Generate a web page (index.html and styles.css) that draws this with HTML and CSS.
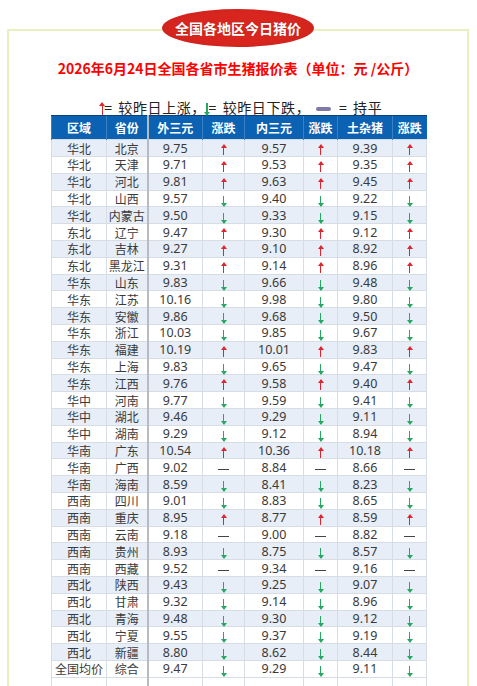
FILE: index.html
```html
<!DOCTYPE html>
<html lang="zh-CN">
<head>
<meta charset="utf-8">
<title>全国各地区今日猪价</title>
<link rel="stylesheet" href="styles.css">
</head>
<body>
<div class="frame">
  <div class="badge">全国各地区今日猪价</div>
  <h1 class="title">2026年6月24日全国各省市生猪报价表（单位：元 /公斤）</h1>
  <p class="legend"><i class="u big"></i>= 较昨日上涨，<i class="d big"></i>= 较昨日下跌，<i class="bar"></i> = 持平</p>
  <table class="prices">
    <colgroup>
      <col class="c1"><col class="c2"><col class="c3"><col class="c4"><col class="c5"><col class="c6"><col class="c7"><col class="c8">
    </colgroup>
    <thead>
      <tr><th>区域</th><th class="sep">省份</th><th>外三元</th><th>涨跌</th><th>内三元</th><th>涨跌</th><th>土杂猪</th><th>涨跌</th></tr>
    </thead>
    <tbody>
      <tr><td>华北</td><td class="sep">北京</td><td class="n">9.75</td><td><i class="u"></i></td><td class="n">9.57</td><td><i class="u"></i></td><td class="n">9.39</td><td><i class="u"></i></td></tr>
      <tr><td>华北</td><td class="sep">天津</td><td class="n">9.71</td><td><i class="u"></i></td><td class="n">9.53</td><td><i class="u"></i></td><td class="n">9.35</td><td><i class="u"></i></td></tr>
      <tr><td>华北</td><td class="sep">河北</td><td class="n">9.81</td><td><i class="u"></i></td><td class="n">9.63</td><td><i class="u"></i></td><td class="n">9.45</td><td><i class="u"></i></td></tr>
      <tr><td>华北</td><td class="sep">山西</td><td class="n">9.57</td><td><i class="d"></i></td><td class="n">9.40</td><td><i class="d"></i></td><td class="n">9.22</td><td><i class="d"></i></td></tr>
      <tr><td>华北</td><td class="sep">内蒙古</td><td class="n">9.50</td><td><i class="d"></i></td><td class="n">9.33</td><td><i class="d"></i></td><td class="n">9.15</td><td><i class="d"></i></td></tr>
      <tr><td>东北</td><td class="sep">辽宁</td><td class="n">9.47</td><td><i class="u"></i></td><td class="n">9.30</td><td><i class="u"></i></td><td class="n">9.12</td><td><i class="u"></i></td></tr>
      <tr><td>东北</td><td class="sep">吉林</td><td class="n">9.27</td><td><i class="u"></i></td><td class="n">9.10</td><td><i class="u"></i></td><td class="n">8.92</td><td><i class="u"></i></td></tr>
      <tr><td>东北</td><td class="sep">黑龙江</td><td class="n">9.31</td><td><i class="u"></i></td><td class="n">9.14</td><td><i class="u"></i></td><td class="n">8.96</td><td><i class="u"></i></td></tr>
      <tr><td>华东</td><td class="sep">山东</td><td class="n">9.83</td><td><i class="d"></i></td><td class="n">9.66</td><td><i class="d"></i></td><td class="n">9.48</td><td><i class="d"></i></td></tr>
      <tr><td>华东</td><td class="sep">江苏</td><td class="n">10.16</td><td><i class="d"></i></td><td class="n">9.98</td><td><i class="d"></i></td><td class="n">9.80</td><td><i class="d"></i></td></tr>
      <tr><td>华东</td><td class="sep">安徽</td><td class="n">9.86</td><td><i class="d"></i></td><td class="n">9.68</td><td><i class="d"></i></td><td class="n">9.50</td><td><i class="d"></i></td></tr>
      <tr><td>华东</td><td class="sep">浙江</td><td class="n">10.03</td><td><i class="d"></i></td><td class="n">9.85</td><td><i class="d"></i></td><td class="n">9.67</td><td><i class="d"></i></td></tr>
      <tr><td>华东</td><td class="sep">福建</td><td class="n">10.19</td><td><i class="u"></i></td><td class="n">10.01</td><td><i class="u"></i></td><td class="n">9.83</td><td><i class="u"></i></td></tr>
      <tr><td>华东</td><td class="sep">上海</td><td class="n">9.83</td><td><i class="d"></i></td><td class="n">9.65</td><td><i class="d"></i></td><td class="n">9.47</td><td><i class="d"></i></td></tr>
      <tr><td>华东</td><td class="sep">江西</td><td class="n">9.76</td><td><i class="u"></i></td><td class="n">9.58</td><td><i class="u"></i></td><td class="n">9.40</td><td><i class="u"></i></td></tr>
      <tr><td>华中</td><td class="sep">河南</td><td class="n">9.77</td><td><i class="d"></i></td><td class="n">9.59</td><td><i class="d"></i></td><td class="n">9.41</td><td><i class="d"></i></td></tr>
      <tr><td>华中</td><td class="sep">湖北</td><td class="n">9.46</td><td><i class="d"></i></td><td class="n">9.29</td><td><i class="d"></i></td><td class="n">9.11</td><td><i class="d"></i></td></tr>
      <tr><td>华中</td><td class="sep">湖南</td><td class="n">9.29</td><td><i class="d"></i></td><td class="n">9.12</td><td><i class="d"></i></td><td class="n">8.94</td><td><i class="d"></i></td></tr>
      <tr><td>华南</td><td class="sep">广东</td><td class="n">10.54</td><td><i class="u"></i></td><td class="n">10.36</td><td><i class="u"></i></td><td class="n">10.18</td><td><i class="u"></i></td></tr>
      <tr><td>华南</td><td class="sep">广西</td><td class="n">9.02</td><td><i class="f"></i></td><td class="n">8.84</td><td><i class="f"></i></td><td class="n">8.66</td><td><i class="f"></i></td></tr>
      <tr><td>华南</td><td class="sep">海南</td><td class="n">8.59</td><td><i class="d"></i></td><td class="n">8.41</td><td><i class="d"></i></td><td class="n">8.23</td><td><i class="d"></i></td></tr>
      <tr><td>西南</td><td class="sep">四川</td><td class="n">9.01</td><td><i class="d"></i></td><td class="n">8.83</td><td><i class="d"></i></td><td class="n">8.65</td><td><i class="d"></i></td></tr>
      <tr><td>西南</td><td class="sep">重庆</td><td class="n">8.95</td><td><i class="u"></i></td><td class="n">8.77</td><td><i class="u"></i></td><td class="n">8.59</td><td><i class="u"></i></td></tr>
      <tr><td>西南</td><td class="sep">云南</td><td class="n">9.18</td><td><i class="f"></i></td><td class="n">9.00</td><td><i class="f"></i></td><td class="n">8.82</td><td><i class="f"></i></td></tr>
      <tr><td>西南</td><td class="sep">贵州</td><td class="n">8.93</td><td><i class="d"></i></td><td class="n">8.75</td><td><i class="d"></i></td><td class="n">8.57</td><td><i class="d"></i></td></tr>
      <tr><td>西南</td><td class="sep">西藏</td><td class="n">9.52</td><td><i class="f"></i></td><td class="n">9.34</td><td><i class="f"></i></td><td class="n">9.16</td><td><i class="f"></i></td></tr>
      <tr><td>西北</td><td class="sep">陕西</td><td class="n">9.43</td><td><i class="d"></i></td><td class="n">9.25</td><td><i class="d"></i></td><td class="n">9.07</td><td><i class="d"></i></td></tr>
      <tr><td>西北</td><td class="sep">甘肃</td><td class="n">9.32</td><td><i class="d"></i></td><td class="n">9.14</td><td><i class="d"></i></td><td class="n">8.96</td><td><i class="d"></i></td></tr>
      <tr><td>西北</td><td class="sep">青海</td><td class="n">9.48</td><td><i class="d"></i></td><td class="n">9.30</td><td><i class="d"></i></td><td class="n">9.12</td><td><i class="d"></i></td></tr>
      <tr><td>西北</td><td class="sep">宁夏</td><td class="n">9.55</td><td><i class="d"></i></td><td class="n">9.37</td><td><i class="d"></i></td><td class="n">9.19</td><td><i class="d"></i></td></tr>
      <tr><td>西北</td><td class="sep">新疆</td><td class="n">8.80</td><td><i class="d"></i></td><td class="n">8.62</td><td><i class="d"></i></td><td class="n">8.44</td><td><i class="d"></i></td></tr>
      <tr><td>全国均价</td><td class="sep">综合</td><td class="n">9.47</td><td><i class="d"></i></td><td class="n">9.29</td><td><i class="d"></i></td><td class="n">9.11</td><td><i class="d"></i></td></tr>
      <tr class="empty"><td></td><td class="sep"></td><td></td><td></td><td></td><td></td><td></td><td></td></tr>
    </tbody>
  </table>
</div>
</body>
</html>
```
FILE: styles.css
```css
html, body {
  margin: 0;
  padding: 0;
  background: #ffffff;
}
body {
  font-family: "Noto Sans", "Noto Sans CJK SC", sans-serif;
  color: #333;
}
.frame {
  position: relative;
  margin: 29px 0 0 7px;
  width: 458px;
  border: 2px solid #e8f0bf;
  padding: 27px 0 40px;
}
.badge {
  position: absolute;
  left: 50%;
  top: -22px;
  transform: translateX(-50%);
  width: 152px;
  height: 38px;
  border-radius: 50%;
  background: radial-gradient(ellipse at center, #d8261f 55%, #c51d19 100%);
  color: #fff;
  font-family: "Noto Sans CJK SC", sans-serif;
  font-weight: 700;
  font-size: 14px;
  line-height: 38px;
  text-align: center;
  text-shadow: 0 0 1px rgba(0,0,0,0.3);
}
.title {
  margin: 0;
  font-family: "Noto Sans CJK SC", sans-serif;
  font-weight: 700;
  font-size: 14px;
  line-height: 20px;
  color: #ff0000;
  text-align: center;
}
.legend {
  margin: 21px 0 0;
  padding-left: 8px;
  font-family: "Noto Sans CJK SC", sans-serif;
  font-size: 14px;
  line-height: 16px;
  letter-spacing: 0.6px;
  word-spacing: 2px;
  color: #222;
  text-align: center;
}
.bar {
  display: inline-block;
  width: 15px;
  height: 4px;
  border-radius: 2px;
  background: #7d79a9;
  vertical-align: middle;
  margin: 0 2px 0 6px;
}
.prices {
  margin-left: 42px;
  width: 375px;
  table-layout: fixed;
  border-collapse: collapse;
  font-size: 12px;
}
.c1 { width: 55px; }
.c2 { width: 41px; }
.c3 { width: 55px; }
.c4 { width: 42px; }
.c5 { width: 59px; }
.c6 { width: 34px; }
.c7 { width: 55px; }
.c8 { width: 34px; }
.prices th {
  height: 23px;
  padding: 0;
  background: #0b62b2;
  color: #fff;
  font-family: "Noto Sans CJK SC", sans-serif;
  font-weight: 700;
  font-size: 12px;
  border-left: 1px solid #3a80c4;
  border-top: 1px solid #0a3f80;
  text-align: center;
}
.prices td {
  height: 15.8px;
  padding: 0;
  line-height: 15px;
  text-align: center;
  border: 1px solid #d7dde5;
  font-family: "Noto Sans CJK SC", sans-serif;
  white-space: nowrap;
  color: #3a3a3a;
}
.prices td.n {
  font-family: "Noto Sans", sans-serif;
  font-size: 12.5px;
}
.prices tbody tr:nth-child(odd) td {
  background: #e7eef7;
}
.prices tbody tr.empty td {
  background: #fff;
}
.prices .sep {
  border-right: 2px solid #b8bcc2;
}
.u, .d {
  display: inline-block;
  position: relative;
  width: 1.4px;
  height: 10px;
  vertical-align: middle;
}
.u { background: #e1252e; }
.d { background: #24a862; }
.u::before, .d::before {
  content: "";
  position: absolute;
  left: -2.3px;
  border-left: 3px solid transparent;
  border-right: 3px solid transparent;
}
.u::before {
  top: -1px;
  border-bottom: 4px solid #e1252e;
}
.d::before {
  bottom: -1px;
  border-top: 4px solid #24a862;
}
.u.big, .d.big {
  height: 12px;
  width: 1.6px;
  margin-right: 1px;
}
.f {
  display: inline-block;
  width: 11px;
  height: 1px;
  background: #444;
  vertical-align: middle;
}
```
